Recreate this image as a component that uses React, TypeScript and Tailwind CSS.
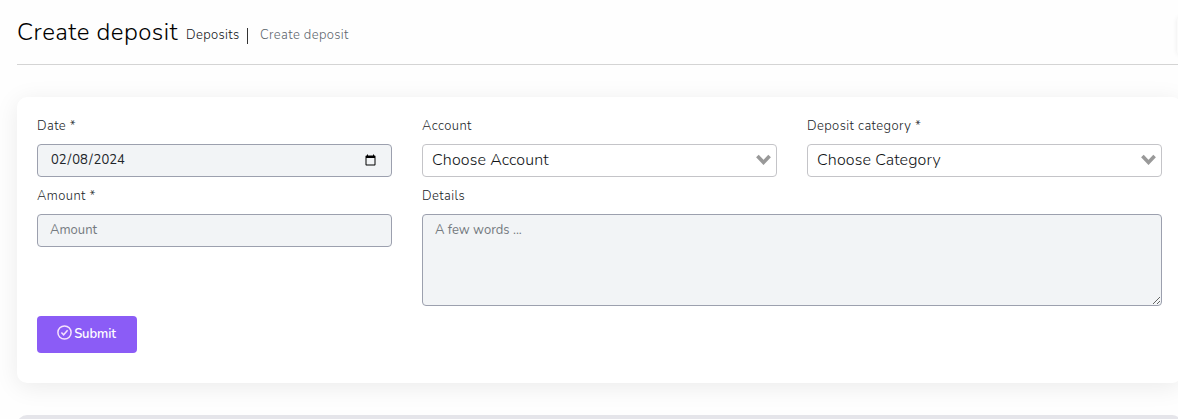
import type { ReactNode } from 'react';

const control =
  'block w-full rounded-[4px] border border-[#9ca0ae] bg-[#f2f4f6] px-3 text-[13px] text-[#212529] outline-none placeholder:text-[#757a80]';

function Field({ label, className = '', children }: { label: string; className?: string; children: ReactNode }) {
  return (
    <div className={className}>
      <label className="flex h-7 items-start pt-px text-[13px] leading-[19px] font-[350] tracking-[0.42px] text-[#212529]">
        {label}
      </label>
      {children}
    </div>
  );
}

function Select({ text }: { text: string }) {
  return (
    <button type="button" className="flex h-[33px] w-full items-center justify-between rounded-[4px] border border-[#c4c4c8] bg-white pr-[5px] pb-[2px] pl-[9px] text-[16px] font-[350] tracking-[0.12px] text-[#111417]">
      <span>{text}</span>
      <svg width="15" height="11" viewBox="0 0 15 11" fill="none" stroke="#999" strokeWidth="3.6">
        <path d="M1.4 1.9 7.5 8.4l6.1-6.5" />
      </svg>
    </button>
  );
}

export default function App() {
  return (
    <div className="h-[419px] w-full overflow-hidden bg-[#fefefe] pl-[17px] font-['Nunito','Lato',sans-serif] font-normal">
      <header className="flex h-[65px] w-[1165px] items-start border-b border-[#d4d4d4]">
        <h1 className="mt-[17px] w-[169px] text-[24px] leading-[30px] font-[330] tracking-[0.5px] whitespace-nowrap text-black">Create deposit</h1>
        <nav className="mt-[25px] flex items-center text-[13px] leading-5 font-[360] whitespace-nowrap">
          <a className="w-[61px] tracking-[0.38px] text-[#111417]">Deposits</a>
          <span className="mt-[2px] h-4 w-px bg-[#333]" />
          <span className="ml-3 tracking-[0.38px] text-[#5f676e]">Create deposit</span>
        </nav>
        <div className="mt-[17px] ml-auto h-[38px] w-[5px] rounded-l bg-[#fbfbfb] shadow-[0_0_5px_rgba(0,0,0,0.08)]" />
      </header>

      <main className="mt-8 h-[286px] w-[1165px] rounded-[10px] bg-white px-5 pt-[19px] shadow-[0_4px_24px_rgba(0,0,0,0.08)]">
        <form onSubmit={(e) => e.preventDefault()}>
          <div className="grid grid-cols-3 gap-x-[30px] gap-y-[9px]">
            <Field label="Date *">
              <input type="date" defaultValue="2024-02-08" className={`${control} h-[33px]`} />
            </Field>
            <Field label="Account">
              <Select text="Choose Account" />
            </Field>
            <Field label="Deposit category *">
              <Select text="Choose Category" />
            </Field>
            <Field label="Amount *">
              <input placeholder="Amount" className={`${control} h-[33px] pb-[2px]`} />
            </Field>
            <Field label="Details" className="col-span-2">
              <textarea placeholder="A few words ..." className={`${control} h-[92px] resize pt-[5px] leading-5`} />
            </Field>
          </div>
          <button type="submit" className="mt-[10px] flex h-[37px] w-[100px] items-center justify-center gap-[2px] rounded-[4px] bg-[#8b5cf6] pr-px text-[13px] font-semibold tracking-[-0.1px] text-white">
            <svg width="15" height="15" viewBox="0 0 15 15" fill="none" stroke="#f6e2fc" strokeWidth="1.5" className="-mt-1">
              <circle cx="7.5" cy="7.5" r="6.6" />
              <path d="m4.4 7.5 2.2 2.3 4-4.6" />
            </svg>
            <span>Submit</span>
          </button>
        </form>
      </main>
      <section className="mt-8 h-10 w-[1165px] rounded-[10px] bg-[#e5e5ea]" />
    </div>
  );
}
